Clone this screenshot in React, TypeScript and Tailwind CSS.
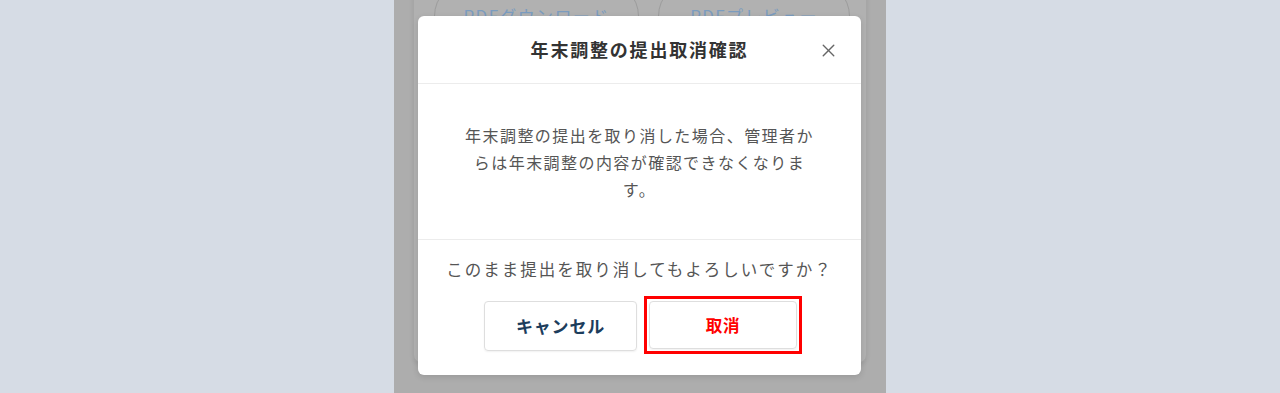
import { X } from "lucide-react";

const jp = { fontFamily: '"Noto Sans CJK JP", "Noto Sans", sans-serif' };

export default function App() {
  return (
    <div className="w-full h-[393px] bg-[#d6dce5] flex justify-center overflow-hidden" style={jp}>
      <div className="relative w-[492px] h-full bg-[#adadad] overflow-hidden">
        {/* page behind the overlay */}
        <div className="absolute left-[19px] right-[19px] top-[-60px] bottom-[30px] rounded-lg bg-[#b1b1b1] border border-[#a6a6a6] shadow-[0_2px_4px_rgba(0,0,0,0.08)]">
          <div className="flex gap-[19px] pl-[20px] pt-[40px]">
            <div className="w-[205px] h-[70px] rounded-full border border-[#9c9c9c] flex items-center justify-center text-[17px] tracking-[0.08em] text-[#7b9cbf]">
              PDFダウンロード
            </div>
            <div className="w-[192px] h-[70px] rounded-full border border-[#9c9c9c] flex items-center justify-center text-[17px] tracking-[0.08em] text-[#7b9cbf]">
              PDFプレビュー
            </div>
          </div>
        </div>

        {/* modal */}
        <div className="absolute left-[24px] top-[16px] w-[443px] h-[359px] bg-white rounded-[6px] shadow-[0_2px_6px_rgba(0,0,0,0.12)] flex flex-col">
          <div className="relative h-[68px] flex items-center justify-center border-b border-[#ececec]">
            <h2 className="text-[18px] font-bold tracking-[0.1em] text-[#333]">年末調整の提出取消確認</h2>
            <button className="absolute right-[22px] top-[24px] text-[#666]">
              <X size={21} strokeWidth={1.6} />
            </button>
          </div>
          <div className="h-[156px] flex items-center justify-center border-b border-[#ececec] pt-[2px]">
            <p className="w-[360px] text-center text-[16px] leading-[27px] tracking-[0.09em] text-[#555]">
              年末調整の提出を取り消した場合、管理者からは年末調整の内容が確認できなくなります。
            </p>
          </div>
          <p className="mt-[16px] text-center text-[16.5px] leading-[26px] tracking-[0.12em] text-[#555]">
            このまま提出を取り消してもよろしいですか？
          </p>
          <div className="mt-[14px] flex justify-center gap-[7px] pl-[7px]">
            <button className="w-[153px] h-[50px] mt-[5px] rounded-[4px] border border-[#dedede] shadow-[0_1px_2px_rgba(0,0,0,0.06)] text-[17px] font-bold tracking-[0.05em] text-[#1c3d5c]">
              キャンセル
            </button>
            <div className="border-[3px] border-[#ff0000] p-[2px]">
              <button className="w-[148px] h-[48px] rounded-[4px] border border-[#dedede] shadow-[0_1px_2px_rgba(0,0,0,0.06)] text-[16.5px] font-bold tracking-[0.05em] text-[#ff0000]">
                取消
              </button>
            </div>
          </div>
        </div>
      </div>
    </div>
  );
}
